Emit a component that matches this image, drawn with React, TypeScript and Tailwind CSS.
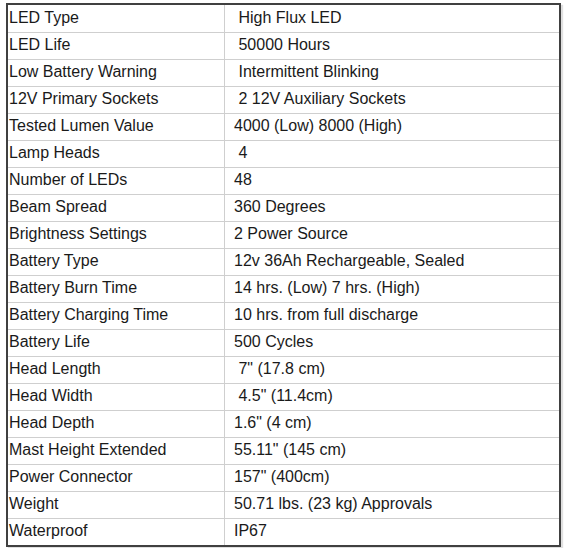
import React from "react";

const rows: [string, string][] = [
  ["LED Type", "\u00a0High Flux LED"],
  ["LED Life", "\u00a050000 Hours"],
  ["Low Battery Warning", "\u00a0Intermittent Blinking"],
  ["12V Primary Sockets", "\u00a02 12V Auxiliary Sockets"],
  ["Tested Lumen Value", "4000 (Low) 8000 (High)"],
  ["Lamp Heads", "\u00a04"],
  ["Number of LEDs", "48"],
  ["Beam Spread", "360 Degrees"],
  ["Brightness Settings", "2 Power Source"],
  ["Battery Type", "12v 36Ah Rechargeable, Sealed"],
  ["Battery Burn Time", "14 hrs. (Low) 7 hrs. (High)"],
  ["Battery Charging Time", "10 hrs. from full discharge"],
  ["Battery Life", "500 Cycles"],
  ["Head Length", "\u00a07\" (17.8 cm)"],
  ["Head Width", "\u00a04.5\" (11.4cm)"],
  ["Head Depth", "1.6\" (4 cm)"],
  ["Mast Height Extended", "55.11\" (145 cm)"],
  ["Power Connector", "157\" (400cm)"],
  ["Weight", "50.71 lbs. (23 kg) Approvals"],
  ["Waterproof", "IP67"],
];

export default function App() {
  return (
    <div className="w-[566px] h-[548px] bg-white pt-[3px] pl-[6px]" style={{ fontFamily: '"Liberation Sans", Arial, sans-serif' }}>
      <div className="w-[555px] border-2 border-[#404040] flex flex-col shadow-[2px_2px_1px_rgba(0,0,0,0.12)]">
        {rows.map(([k, v], i) => (
          <div
            key={i}
            className={`grid grid-cols-[216px_1px_334px] h-[27px] ${i > 0 ? "border-t border-[#cfcfcf]" : ""}`}
          >
            <div className="flex items-center pl-[1px] pb-[2px] text-[16px] text-[#1a1a1a] whitespace-pre">{k}</div>
            <div className="bg-[#cfcfcf]" />
            <div className="flex items-center pl-[9px] pb-[2px] text-[16px] text-[#1a1a1a] whitespace-pre">{v}</div>
          </div>
        ))}
      </div>
    </div>
  );
}
